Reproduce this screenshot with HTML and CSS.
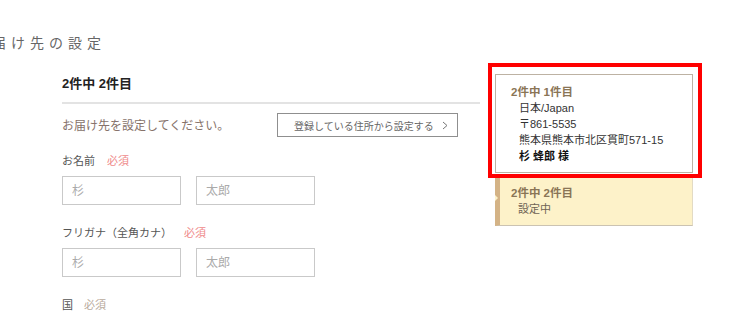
FILE: index.html
```html
<!DOCTYPE html>
<html lang="ja">

<head>
  <meta charset="UTF-8">
  <meta name="viewport" content="width=device-width, initial-scale=1.0">
  <title>お届け先の設定</title>
  <link rel="stylesheet" href="styles.css">
</head>

<body>
  <div class="page">
    <h1 class="title">お届け先の設定</h1>

    <div class="main">
      <div class="form">
        <h2 class="count">2件中 2件目</h2>

        <div class="intro">
          <p class="intro-text">お届け先を設定してください。</p>
          <span class="btn-select">
            登録している住所から設定する
            <svg class="chev" width="6" height="9" viewBox="0 0 6 9">
              <polyline points="1,1 5,4.5 1,8" fill="none" stroke="#777" stroke-width="1" />
            </svg>
          </span>
        </div>

        <div class="field">
          <p class="label">お名前<span class="req">必須</span></p>
          <div class="inputs">
            <input type="text" placeholder="杉">
            <input type="text" placeholder="太郎">
          </div>
        </div>

        <div class="field">
          <p class="label">フリガナ（全角カナ）<span class="req">必須</span></p>
          <div class="inputs">
            <input type="text" placeholder="杉">
            <input type="text" placeholder="太郎">
          </div>
        </div>

        <div class="field">
          <p class="label">国<span class="req req-gray">必須</span></p>
        </div>
      </div>

      <div class="side">
        <div class="card">
          <p class="card-title">2件中 1件目</p>
          <p class="card-line">日本/Japan</p>
          <p class="card-line">〒861-5535</p>
          <p class="card-line">熊本県熊本市北区貫町571-15</p>
          <p class="card-line card-name">杉 蜂郎 様</p>
        </div>
        <div class="card card-current">
          <p class="card-title">2件中 2件目</p>
          <p class="card-line card-status">設定中</p>
        </div>
        <div class="highlight"></div>
      </div>
    </div>
  </div>
</body>

</html>
```

FILE: styles.css
```css
* {
  margin: 0;
  padding: 0;
  box-sizing: border-box;
}

body {
  font-family: "Liberation Sans", "Noto Sans CJK JP", sans-serif;
  background: #fff;
  color: #333;
  overflow: hidden;
}

.page {
  width: 730px;
  height: 317px;
  overflow: hidden;
}

.title {
  margin: 33px 0 0 -27px;
  height: 20px;
  line-height: 20px;
  font-size: 14px;
  font-weight: normal;
  letter-spacing: 5px;
  color: #666;
  white-space: nowrap;
}

.main {
  display: flex;
  gap: 15px;
  margin-top: 21px;
  padding-left: 62px;
}

/* left form */
.form {
  width: 418px;
}

.count {
  height: 30px;
  line-height: 20px;
  font-size: 13px;
  font-weight: bold;
  color: #222;
  border-bottom: 2px solid #e3e3e3;
}

.intro {
  display: flex;
  justify-content: space-between;
  align-items: center;
  margin-top: 8px;
  padding-right: 22px;
}

.intro-text {
  font-size: 12px;
  color: #86726a;
  line-height: 24px;
  padding-top: 2px;
}

.btn-select {
  display: flex;
  align-items: center;
  justify-content: space-between;
  width: 181px;
  height: 24px;
  padding: 0 9px 0 16px;
  font-size: 10px;
  color: #666;
  border: 1px solid #8f8f8f;
  background: #fff;
  cursor: pointer;
}

.field {
  margin-top: 15px;
}

.field + .field {
  margin-top: 20px;
}

.label {
  height: 16px;
  line-height: 16px;
  font-size: 11px;
  color: #555;
  margin-bottom: 7px;
}

.req {
  margin-left: 12px;
  color: #ef8a8a;
}

.req-gray {
  margin-left: 11px;
  color: #b8aa9c;
}

.inputs {
  display: flex;
  gap: 15px;
}

.inputs input {
  width: 119px;
  height: 29px;
  padding: 0 9px;
  font-family: "Liberation Sans", "Noto Sans CJK JP", sans-serif;
  font-size: 12px;
  color: #333;
  border: 1px solid #c9c9c9;
  outline: none;
}

.inputs input::placeholder {
  color: #aaa;
}

/* right cards */
.side {
  position: relative;
  width: 198px;
}

.card {
  padding: 9px 10px 8px 15px;
  border: 1px solid #bdb2a3;
  background: #fff;
}

.card-title {
  line-height: 16px;
  font-size: 11.5px;
  font-weight: bold;
  color: #8a7556;
}

.card-line {
  line-height: 16px;
  font-size: 11px;
  color: #333;
  padding-left: 8px;
}

.card-name {
  font-weight: bold;
  color: #111;
}

.card-current {
  position: relative;
  margin-top: 4px;
  height: 49px;
  padding: 8px 10px 8px 11px;
  border: none;
  border-left: 5px solid #d4b386;
  border-right: 1px solid #e3dbc4;
  border-bottom: 1px solid #cbc3b2;
  background: #fdf2c9;
}

.card-current::before {
  content: "";
  position: absolute;
  left: -5px;
  top: 18px;
  border-top: 3px solid transparent;
  border-bottom: 3px solid transparent;
  border-left: 3px solid #fdf2c9;
}

.card-status {
  color: #6f6355;
  padding-left: 7px;
}

.highlight {
  position: absolute;
  left: -7px;
  top: -11px;
  width: 214px;
  height: 115px;
  border: 4px solid #f00;
}
```
